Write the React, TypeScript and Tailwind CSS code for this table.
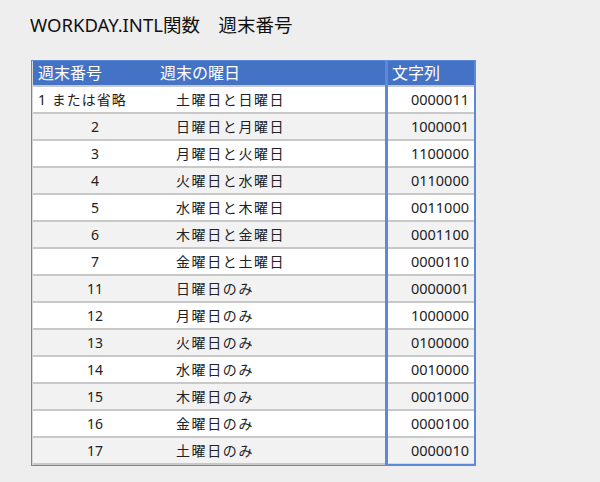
const rows: [string, string, string][] = [
  ["1 または省略", "土曜日と日曜日", "0000011"],
  ["2", "日曜日と月曜日", "1000001"],
  ["3", "月曜日と火曜日", "1100000"],
  ["4", "火曜日と水曜日", "0110000"],
  ["5", "水曜日と木曜日", "0011000"],
  ["6", "木曜日と金曜日", "0001100"],
  ["7", "金曜日と土曜日", "0000110"],
  ["11", "日曜日のみ", "0000001"],
  ["12", "月曜日のみ", "1000000"],
  ["13", "火曜日のみ", "0100000"],
  ["14", "水曜日のみ", "0010000"],
  ["15", "木曜日のみ", "0001000"],
  ["16", "金曜日のみ", "0000100"],
  ["17", "土曜日のみ", "0000010"],
];

const font = { fontFamily: '"Noto Sans", "Noto Sans CJK JP", sans-serif' };

export default function App() {
  return (
    <div className="w-[600px] h-[482px] bg-[#eeeeee] text-[#222]" style={font}>
      <div className="pl-[30px] pt-[11px] h-[60px] text-[18.5px] leading-[28px] text-[#111]">
        WORKDAY.INTL関数　週末番号
      </div>
      <div className="flex pl-[31px]">
        {/* left table */}
        <div className="w-[355px] border border-[#5b8bd8] bg-[#d8d8d8] pl-px">
          <div className="flex h-[24px] bg-[#4472c4] text-white text-[16px] leading-[24px] border-b-2 border-[#c8c8c8] box-content">
            <div className="w-[124px] pl-[5px]">週末番号</div>
            <div className="flex-1 pl-[3px]">週末の曜日</div>
          </div>
          {rows.map(([n, d], i) => (
            <div
              key={n}
              className={`flex h-[25px] box-content border-b-2 border-[#c8c8c8] text-[14px] leading-[25px] ${
                i % 2 === 0 ? "bg-white" : "bg-[#f2f2f2]"
              }`}
            >
              {i === 0 ? (
                <div className="w-[124px] pl-[5px] tracking-[1px]">{n}</div>
              ) : (
                <div className="w-[124px] text-center">{n}</div>
              )}
              <div className="flex-1 pl-[19px] tracking-[1.6px]">{d}</div>
            </div>
          ))}
        </div>
        {/* right table */}
        <div className="w-[90px] border-2 border-[#5b8bd8] border-t bg-[#d8d8d8]">
          <div className="h-[24px] bg-[#4472c4] text-white text-[16px] leading-[24px] pl-[4px] border-b-2 border-[#c8c8c8] box-content">
            文字列
          </div>
          {rows.map(([n, , s], i) => (
            <div
              key={n}
              className={`h-[25px] box-content border-b-2 border-[#c8c8c8] last:border-b-0 text-[14.5px] leading-[25px] text-right pr-[5px] ${
                i % 2 === 0 ? "bg-white" : "bg-[#f2f2f2]"
              }`}
            >
              {s}
            </div>
          ))}
        </div>
      </div>
    </div>
  );
}
